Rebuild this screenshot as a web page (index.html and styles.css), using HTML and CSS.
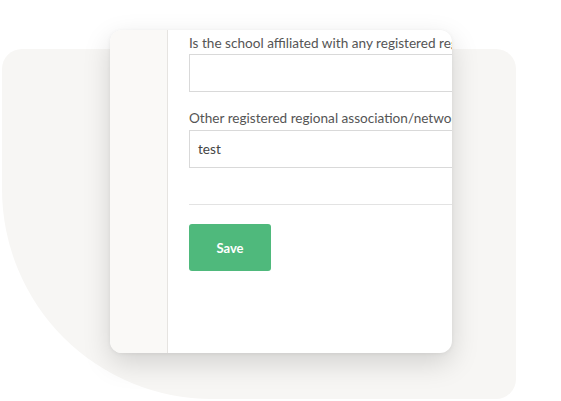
FILE: index.html
```html
<!DOCTYPE html>
<html lang="en">
<head>
<meta charset="utf-8">
<title>School affiliation form</title>
<link rel="stylesheet" href="styles.css">
</head>
<body>
<div class="stage">
  <div class="backdrop"></div>
  <div class="card">
    <aside class="sidebar"></aside>
    <main class="main">
      <div class="form">
        <label class="label">Is the school affiliated with any registered regional association/network?</label>
        <div class="input"></div>
        <label class="label label-gap">Other registered regional association/network</label>
        <div class="input">test</div>
        <hr class="divider">
        <button class="btn-save" type="button">Save</button>
      </div>
    </main>
  </div>
</div>
</body>
</html>
```

FILE: styles.css
```css
html, body {
  margin: 0;
  padding: 0;
  background: #ffffff;
}
body {
  width: 561px;
  height: 401px;
  overflow: hidden;
  font-family: "Lato", "Open Sans", "Liberation Sans", sans-serif;
}
.stage {
  position: relative;
  width: 561px;
  height: 401px;
  padding: 30px 0 0 110px;
  box-sizing: border-box;
}
.backdrop {
  position: absolute;
  left: 2px;
  top: 49px;
  width: 514px;
  height: 350px;
  background: #f7f6f4;
  border-radius: 20px 20px 20px 210px;
  z-index: 0;
}
.card {
  position: relative;
  z-index: 1;
  width: 342px;
  height: 323px;
  border-radius: 12px;
  overflow: hidden;
  background: #ffffff;
  display: flex;
  box-shadow: 0 10px 28px rgba(0, 0, 0, 0.15), 0 1px 4px rgba(0, 0, 0, 0.06);
}
.sidebar {
  flex: 0 0 57px;
  background: #faf9f7;
  border-right: 1px solid #e6e4e1;
}
.main {
  flex: 1 1 auto;
  min-width: 0;
  padding: 4px 0 0 21px;
  overflow: hidden;
}
.form {
  width: 420px;
  display: flex;
  flex-direction: column;
  align-items: flex-start;
}
.label {
  display: block;
  font-size: 13.6px;
  line-height: 18px;
  color: #555555;
  white-space: nowrap;
  margin-bottom: 2px;
}
.label-gap {
  margin-top: 17px;
  margin-bottom: 3px;
}
.input {
  box-sizing: border-box;
  width: 420px;
  height: 38px;
  border: 1px solid #d9d9d9;
  padding: 0 8px;
  font-size: 13.6px;
  line-height: 36px;
  color: #444444;
}
.divider {
  width: 420px;
  margin: 36px 0 0 0;
  border: 0;
  border-top: 1px solid #e3e3e3;
  height: 0;
}
.btn-save {
  margin-top: 19px;
  width: 82px;
  height: 47px;
  border: 0;
  border-radius: 3px;
  background: #4fb97c;
  color: #ffffff;
  font-family: "Lato", "Open Sans", "Liberation Sans", sans-serif;
  font-size: 13px;
  font-weight: 700;
  padding: 0;
}
```
